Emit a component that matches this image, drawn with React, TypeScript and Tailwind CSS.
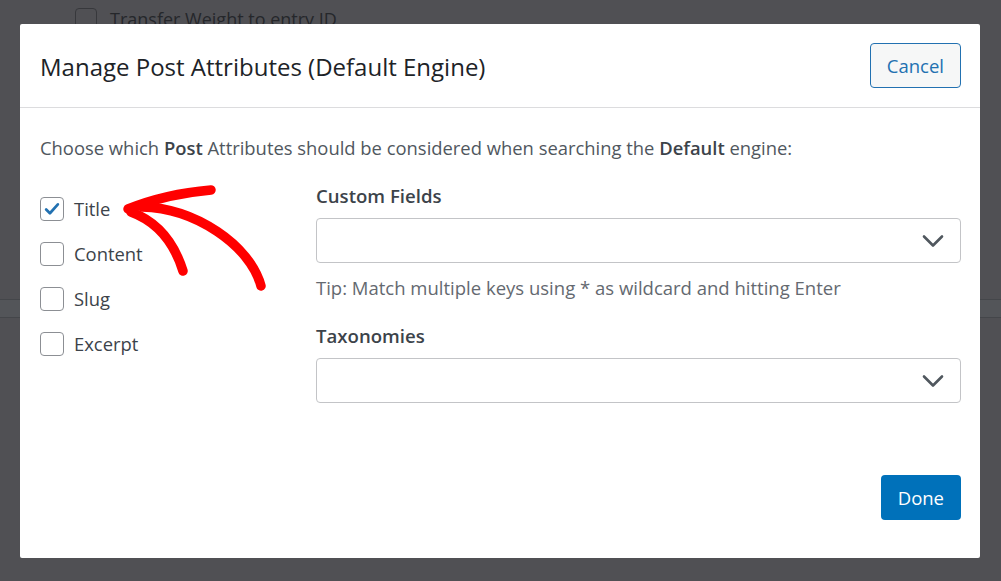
type Attr = {
  label: string;
  checked: boolean;
};

const attributes: Attr[] = [
  { label: "Title", checked: true },
  { label: "Content", checked: false },
  { label: "Slug", checked: false },
  { label: "Excerpt", checked: false },
];

const Checkbox = ({ checked }: { checked: boolean }) => (
  <span className="flex h-6 w-6 shrink-0 items-center justify-center rounded-[4px] border border-[#8c8f94] bg-white">
    {checked && (
      <svg viewBox="0 0 20 20" className="h-[18px] w-[18px]" fill="none">
        <path d="M3.5 10.5l4.2 4.2L16.5 4.8" stroke="#2271b1" strokeWidth="3" strokeLinecap="round" strokeLinejoin="round" />
      </svg>
    )}
  </span>
);

const SelectBox = () => (
  <div className="flex h-[45px] w-full items-center justify-end rounded-[4px] border border-[#c3c4c7] bg-white pr-[16px]">
    <svg width="22" height="14" viewBox="0 0 22 14" fill="none">
      <path d="M2 2.5l9 9 9-9" stroke="#50575e" strokeWidth="2.6" strokeLinecap="round" strokeLinejoin="round" />
    </svg>
  </div>
);

function Arrow() {
  return (
    <svg className="pointer-events-none absolute left-0 top-0" width="300" height="300" viewBox="0 0 300 300" fill="none">
      <g stroke="#ff0000" strokeWidth="9.5" strokeLinecap="round" strokeLinejoin="round">
        <path d="M128 209 Q165 194 211 190" />
        <path d="M131 212 Q169 226 183 271" />
        <path d="M142 207 C 195 208, 250 245, 261 286" />
      </g>
    </svg>
  );
}

export default function App() {
  return (
    <div className="relative h-[581px] w-[1001px] overflow-hidden bg-[#505054] font-['Open_Sans',sans-serif]">
      {/* page behind the overlay */}
      <div className="flex items-center gap-[13px] pl-[75px] pt-[8px]">
        <span className="h-[22px] w-[22px] rounded-[4px] border border-[#37383c]" />
        <span className="text-[18px] leading-[22px] text-[#25272b]">Transfer Weight to entry ID</span>
      </div>
      <div className="mt-[269px] h-[19px] border-y border-[#44464a] bg-[#535559]" />

      {/* modal */}
      <div className="absolute left-[20px] top-[24px] flex h-[534px] w-[960px] flex-col rounded-[2px] bg-white">
        <div className="flex h-[84px] shrink-0 items-center justify-between border-b border-[#dcdcde] pl-5 pr-[19px]">
          <h1 className="pt-[3px] text-[24px] text-[#1d2327]">Manage Post Attributes (Default Engine)</h1>
          <button className="h-[45px] rounded-[4px] border border-[#2271b1] bg-[#f6f7f7] px-[16px] text-[18.5px] text-[#2271b1]">
            Cancel
          </button>
        </div>

        <div className="relative flex-1 pl-5 pr-[19px] pt-[26px]">
          <p className="text-[18.4px] leading-[27px] text-[#50575e]">
            Choose which <b className="font-semibold text-[#3c434a]">Post</b> Attributes should be considered when searching the{" "}
            <b className="font-semibold text-[#3c434a]">Default</b> engine:
          </p>

          <div className="mt-[21px] flex">
            <div className="flex w-[276px] shrink-0 flex-col pt-[4px]">
              {attributes.map((a) => (
                <label key={a.label} className="flex h-[45px] items-center gap-[10px]">
                  <Checkbox checked={a.checked} />
                  <span className="text-[18.4px] text-[#3c434a]">{a.label}</span>
                </label>
              ))}
            </div>

            <div className="flex flex-1 flex-col">
              <div className="mb-[9px] text-[18.6px] font-semibold leading-[27px] text-[#3c434a]">Custom Fields</div>
              <SelectBox />
              <p className="mt-[11px] text-[18.5px] leading-[27px] text-[#646970]">
                Tip: Match multiple keys using * as wildcard and hitting Enter
              </p>
              <div className="mb-[9px] mt-[21px] text-[18.6px] font-semibold leading-[27px] text-[#3c434a]">Taxonomies</div>
              <SelectBox />
            </div>
          </div>
        </div>

        <div className="flex shrink-0 justify-end pb-[38px] pr-[19px]">
          <button className="h-[45px] rounded-[4px] bg-[#0071ba] px-[17px] text-[18.5px] text-white">Done</button>
        </div>

        <div className="pointer-events-none absolute -left-[20px] -top-[24px]">
          <Arrow />
        </div>
      </div>
    </div>
  );
}
